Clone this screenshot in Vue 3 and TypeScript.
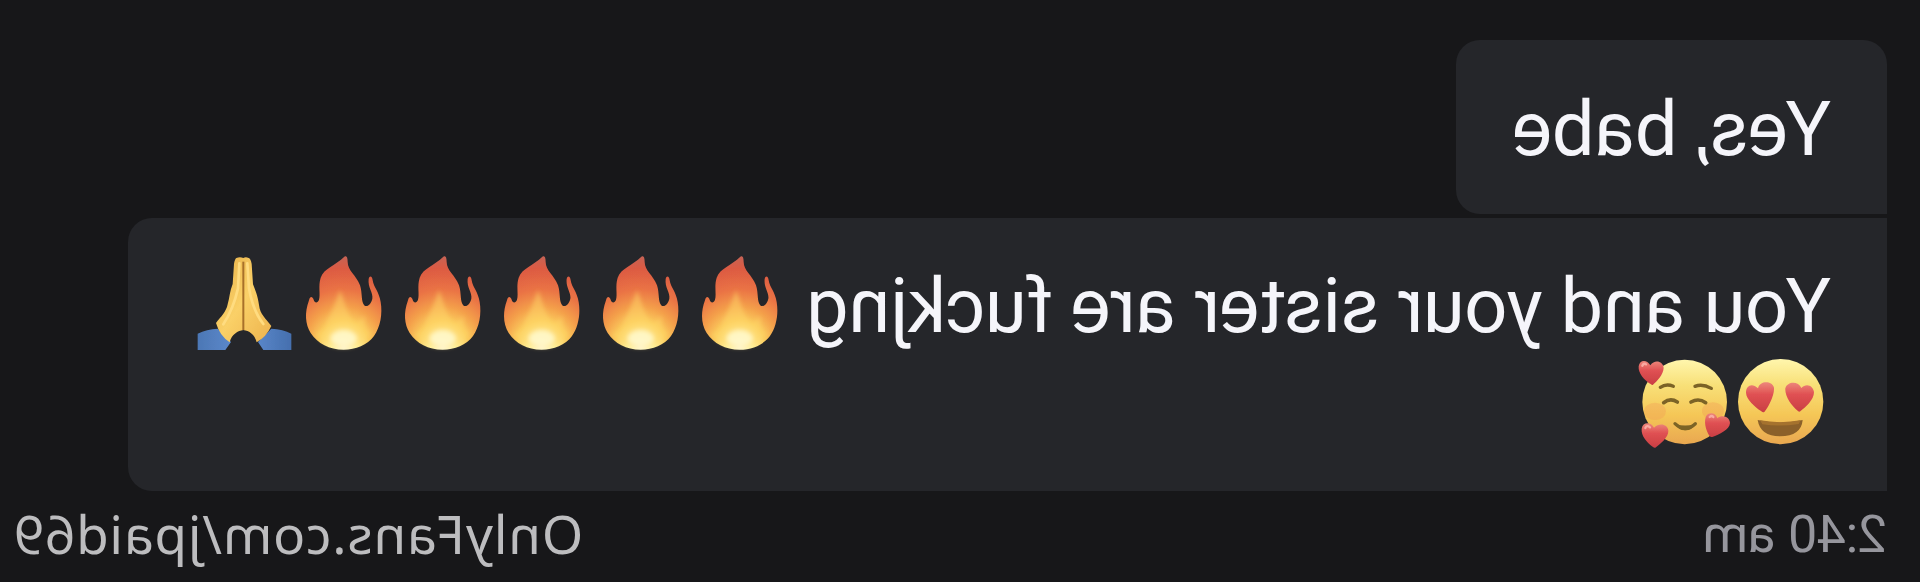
<script setup lang="ts">
const flames: number[] = [1, 2, 3, 4, 5]
</script>

<template>
  <main class="chat">
    <section class="bubble first">
      <span class="text yes">Yes, babe</span>
    </section>
    <section class="bubble second">
      <div class="line">
        <span class="text long">You and your sister are fuckjng</span>
        <svg v-for="n in flames" :key="n" class="emoji flip" viewBox="333 15 297 330">
          <defs>
            <radialGradient :id="'fire' + n" gradientUnits="userSpaceOnUse" cx="488" cy="318" r="275">
              <stop offset="0" stop-color="#fffce0" />
              <stop offset=".14" stop-color="#fff3a0" />
              <stop offset=".28" stop-color="#fbcb5c" />
              <stop offset=".43" stop-color="#f4a04b" />
              <stop offset=".62" stop-color="#ea7344" />
              <stop offset=".85" stop-color="#dc5a43" />
              <stop offset="1" stop-color="#c26558" />
            </radialGradient>
            <filter :id="'glow' + n"><feGaussianBlur stdDeviation="7" /></filter>
            <filter :id="'edge' + n"><feGaussianBlur stdDeviation="2" /></filter>
          </defs>
          <g :filter="`url(#edge${n})`">
            <path :fill="`url(#fire${n})`" d="M488 329C445 329 410 311 389 279C373 253 370 219 384 181C387 168 394 168 398 179C401 190 410 190 414 179C419 162 411 139 419 113C429 84 464 76 490 50C498 45 500 55 500 66C500 92 525 104 537 136C545 160 539 186 551 197C561 202 571 190 574 176C577 158 560 143 563 117C566 105 574 109 575 121C578 142 594 155 599 186C605 222 598 261 579 288C559 315 524 329 488 329Z" />
            <g :filter="`url(#glow${n})`">
              <path fill="#ffd867" opacity=".5" d="M402 278C421 280 434 265 440 240C451 220 464 185 477 150C492 185 500 230 518 246C531 250 540 240 550 226C548 259 556 275 570 276C550 309 524 324 488 324C447 324 417 303 402 278Z" />
              <ellipse cx="488" cy="295" rx="38" ry="24" fill="#fffddd" opacity=".7" />
            </g>
          </g>
        </svg>
        <svg class="emoji flip" viewBox="39 15 297 330">
          <defs>
            <linearGradient id="hand" x1="0" x2="1" y1="0" y2="1">
              <stop offset="0" stop-color="#e6ae47" />
              <stop offset=".5" stop-color="#fad067" />
              <stop offset="1" stop-color="#edb34e" />
            </linearGradient>
            <linearGradient id="sleeve" x1="0" x2="1">
              <stop offset="0" stop-color="#4c77b5" />
              <stop offset=".5" stop-color="#618fd3" />
              <stop offset="1" stop-color="#456fae" />
            </linearGradient>
            <filter id="soft"><feGaussianBlur stdDeviation="2" /></filter>
          </defs>
          <g filter="url(#soft)">
            <path fill="url(#sleeve)" d="M53 281Q80 267 113 266L153 306L136 330H53ZM334 281Q309 267 274 266L234 306L250 330H334Z" />
            <path fill="url(#hand)" d="M190 54Q180 49 169 54Q164 58 162 72L158 132C149 153 149 172 143 193C139 215 123 230 108 249Q119 287 149 307C155 283 174 272 190 270C207 272 224 283 230 307Q259 291 274 258C257 235 240 223 237 195C233 166 226 151 219 133L215 72Q212 55 206 54Q197 50 190 54Z" />
            <path fill="none" stroke="#a87029" stroke-width="6" d="M190 65V270" />
            <path fill="none" stroke="#ffdc80" stroke-width="8" stroke-linecap="round" d="M178 70L174 145Q160 207 130 253M202 70L207 145Q218 211 250 252" />
          </g>
        </svg>
      </div>
      <div class="line faces">
        <svg class="emoji small flip" viewBox="336 39 297 294">
          <defs>
            <linearGradient id="face" x1="0" x2="0" y1="0" y2="1">
              <stop offset="0" stop-color="#fff6ad" />
              <stop offset=".3" stop-color="#f8e078" />
              <stop offset=".65" stop-color="#f5c757" />
              <stop offset="1" stop-color="#e9a750" />
            </linearGradient>
            <linearGradient id="heart" x1="0" x2="0" y1="0" y2="1">
              <stop offset="0" stop-color="#ed877b" />
              <stop offset=".4" stop-color="#e05153" />
              <stop offset="1" stop-color="#c93e43" />
            </linearGradient>
          </defs>
          <g filter="url(#soft)">
            <circle cx="482" cy="185" r="128" fill="url(#face)" />
            <path fill="url(#heart)" d="M423 213C405 201 379 179 378 158C378 137 396 128 414 145C420 121 456 122 462 143C464 167 443 205 433 216Q429 219 423 213ZM534 213C514 197 494 168 496 145C502 123 536 123 544 144C559 128 580 137 582 157C582 180 556 202 541 214Q537 217 534 213Z" />
            <path fill="#8b602a" d="M413 240Q480 255 548 240Q544 288 480 289Q421 289 413 240Z" />
            <path fill="#a5722f" d="M420 241Q480 252 542 241L536 252Q480 261 427 253Z" />
          </g>
        </svg>
        <svg class="emoji small flip" viewBox="39 39 297 294">
          <g filter="url(#soft)">
            <circle cx="194" cy="186" r="127" fill="url(#face)" />
            <ellipse cx="105" cy="214" rx="33" ry="26" fill="#f19a55" opacity=".35" />
            <ellipse cx="279" cy="213" rx="33" ry="26" fill="#f19a55" opacity=".35" />
            <g fill="none" stroke="#7c6427" stroke-linecap="round" stroke-linejoin="round">
              <path stroke-width="10" d="M121 142Q139 130 160 139M225 139Q247 130 274 145" />
              <path stroke-width="11" d="M131 188Q151 173 172 186M213 186Q236 173 257 188" />
              <path stroke-width="10" d="M165 251Q195 280 226 251" />
            </g>
            <path fill="#7c6427" d="M165 251Q195 262 226 251Q218 270 195 271Q174 270 165 251Z" />
            <path fill="url(#heart)" d="M93 133C73 121 54 101 56 79C59 59 80 57 91 76C105 56 130 65 131 84C130 105 110 124 99 134Q96 136 93 133Z" />
            <path fill="url(#heart)" d="M99 321C80 306 63 288 65 266C68 246 92 244 102 263C117 247 143 251 145 272C146 292 120 312 106 323Q102 324 99 321Z" />
            <path fill="url(#heart)" d="M269 289C256 269 251 242 259 227C270 214 288 219 292 235C308 222 329 232 330 249C329 270 297 283 277 291Q272 292 269 289Z" />
            <path fill="none" stroke="#f8aaa2" stroke-width="7" stroke-linecap="round" d="M67 77Q71 68 78 73M76 264Q80 254 90 262M269 231Q275 225 280 231" />
          </g>
        </svg>
      </div>
    </section>
    <footer>
      <time>2:40 am</time>
      <span class="credit">OnlyFans.com/jpaid69</span>
    </footer>
  </main>
</template>

<style>
body { margin: 0; background: #171719; }
</style>

<style scoped>
.chat {
  box-sizing: border-box;
  width: 1920px;
  height: 582px;
  padding: 40px 0 0 33px;
  overflow: hidden;
  background: #171719;
  font-family: Roboto, sans-serif;
  transform: scaleX(-1);
}
.bubble { box-sizing: border-box; background: #25262a; padding-left: 56px; }
.first { width: 431px; height: 174px; padding-top: 44px; border-radius: 24px 24px 24px 0; }
.second { width: 1759px; height: 273px; margin-top: 4px; padding-top: 27px; border-radius: 0 24px 24px 0; }
.text { display: block; color: #f5f5fa; font-size: 76px; line-height: 90px; white-space: nowrap; letter-spacing: -.48px; }
.yes { letter-spacing: -.6px; }
.line { display: flex; height: 110px; }
.long { flex: 0 0 1044px; padding-top: 16px; }
.faces { height: 98px; margin-top: -2px; }
.emoji { display: block; flex: none; width: 99px; height: 110px; }
.small { height: 98px; }
.flip { transform: scaleX(-1); }
footer { display: flex; justify-content: space-between; padding-right: 13px; line-height: 62px; white-space: nowrap; }
time { padding-top: 13px; color: #96969d; font-size: 52px; letter-spacing: -.4px; }
.credit { padding-top: 12px; color: #bdbdbf; font-family: "Noto Sans", sans-serif; font-size: 53px; letter-spacing: .8px; }
</style>
